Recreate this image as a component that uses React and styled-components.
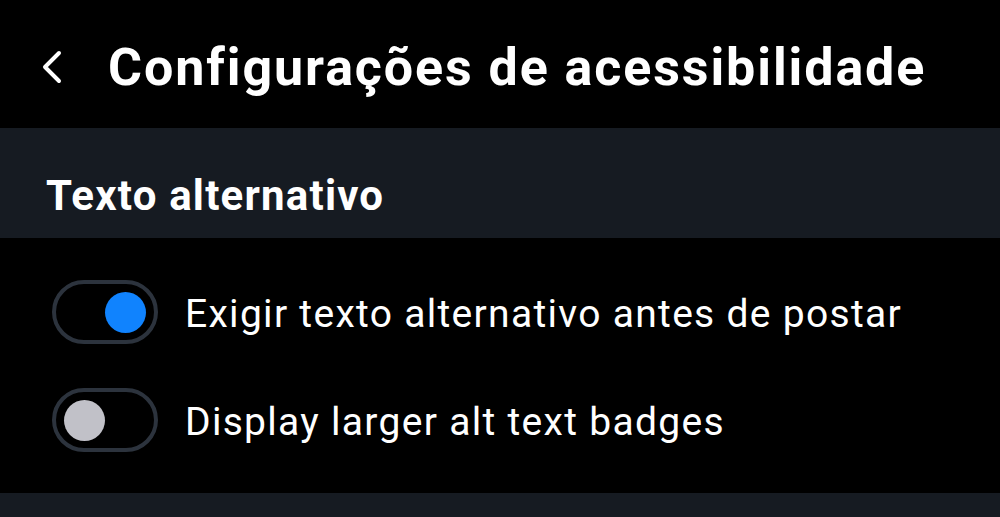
import React, { useState } from "react";
import styled, { createGlobalStyle } from "styled-components";

const Global = createGlobalStyle`
  html, body {
    margin: 0;
    padding: 0;
    background: #000;
  }
  body {
    font-family: Roboto, "Noto Sans", sans-serif;
    color: #fff;
  }
`;

const Page = styled.div`
  width: 1000px;
  height: 517px;
  overflow: hidden;
  background: #000;
`;

const Header = styled.header`
  box-sizing: border-box;
  height: 128px;
  display: flex;
  align-items: center;
  padding: 6px 0 0 42px;
  gap: 46px;
`;

const Back = styled.button`
  background: none;
  border: none;
  padding: 0;
  width: 20px;
  height: 34px;
  display: flex;
  align-items: center;
  justify-content: center;
  color: #fff;
`;

const Title = styled.h1`
  margin: 0;
  font-size: 52px;
  font-weight: 700;
  letter-spacing: 1.9px;
`;

const Section = styled.div`
  box-sizing: border-box;
  background: #161b22;
  height: 110px;
  padding: 43px 0 0 46px;
`;

const SectionTitle = styled.h2`
  margin: 0;
  font-size: 42px;
  font-weight: 700;
  letter-spacing: 1.2px;
`;

const List = styled.div`
  display: flex;
  flex-direction: column;
  padding: 42px 0 41px 52px;
  gap: 44px;
`;

const Row = styled.label`
  display: flex;
  align-items: center;
  gap: 27px;
  height: 64px;
  cursor: pointer;
`;

const Track = styled.span`
  box-sizing: border-box;
  width: 106px;
  height: 64px;
  border: 4px solid #2c333d;
  border-radius: 32px;
  display: flex;
  align-items: center;
  justify-content: ${(p) => (p.$on ? "flex-end" : "flex-start")};
  padding: 0 8px;
`;

const Knob = styled.span`
  width: 41px;
  height: 41px;
  border-radius: 50%;
  background: ${(p) => (p.$on ? "#1083fe" : "#c1c1c8")};
`;

const Label = styled.span`
  padding-top: 3px;
  font-size: 39px;
  font-weight: 400;
  letter-spacing: 1.3px;
`;

const Footer = styled.div`
  background: #161b22;
  height: 40px;
`;

function Toggle({ on, label, onClick }) {
  return (
    <Row onClick={onClick}>
      <Track $on={on}>
        <Knob $on={on} />
      </Track>
      <Label>{label}</Label>
    </Row>
  );
}

export default function App() {
  const [req, setReq] = useState(true);
  const [large, setLarge] = useState(false);
  return (
    <Page>
      <Global />
      <Header>
        <Back aria-label="Voltar">
          <svg width="20" height="34" viewBox="0 0 20 34" fill="none">
            <path
              d="M17 3 L3 17 L17 31"
              stroke="#fff"
              strokeWidth="4"
              strokeLinecap="round"
              strokeLinejoin="round"
            />
          </svg>
        </Back>
        <Title>Configurações de acessibilidade</Title>
      </Header>
      <Section>
        <SectionTitle>Texto alternativo</SectionTitle>
      </Section>
      <List>
        <Toggle
          on={req}
          onClick={() => setReq(!req)}
          label="Exigir texto alternativo antes de postar"
        />
        <Toggle
          on={large}
          onClick={() => setLarge(!large)}
          label="Display larger alt text badges"
        />
      </List>
      <Footer />
    </Page>
  );
}
